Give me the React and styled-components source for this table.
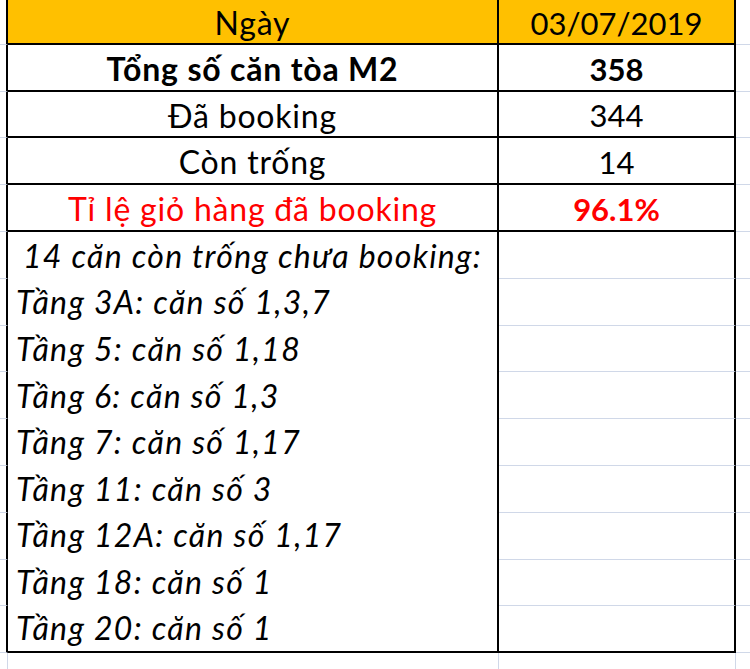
import React from "react";
import styled, { createGlobalStyle, css } from "styled-components";

const Global = createGlobalStyle`
  html, body { margin: 0; padding: 0; background: #ffffff; }
  body { font-family: "Lato", "Liberation Sans", sans-serif; }
`;

const GRID = "#d0d8e8";
const INK = "#000000";

const Sheet = styled.div`
  display: grid;
  grid-template-columns: 8px 491px 237px 1fr;
  grid-template-rows: 45px 47px 46px 47px 47px repeat(9, 46.8px) 1fr;
  width: 750px;
  height: 669px;
  overflow: hidden;
  box-sizing: border-box;
`;

const Gutter = styled.div`
  box-sizing: border-box;
  border-bottom: 1px solid ${GRID};
  ${(p) => p.$edge && css`border-right: 2px solid ${INK};`}
  ${(p) => p.$tail && css`border-bottom: none; border-right: 1px solid ${GRID};`}
  ${(p) => p.$open && css`border-right: none;`}
`;

const Cell = styled.div`
  box-sizing: border-box;
  display: flex;
  align-items: center;
  justify-content: center;
  border-right: 2px solid ${INK};
  border-bottom: ${(p) => (p.$light ? `1px solid ${GRID}` : `2px solid ${INK}`)};
  background: ${(p) => (p.$head ? "#ffc000" : "#ffffff")};
  color: ${(p) => (p.$red ? "#ff0000" : INK)};
  font-size: ${(p) => (p.$label ? "32px" : "31px")};
  letter-spacing: ${(p) => (p.$label ? "0.8px" : "0")};
  font-weight: ${(p) => (p.$bold ? 700 : 400)};
  white-space: nowrap;
  padding-top: 2px;
`;

const NoteCell = styled.div`
  box-sizing: border-box;
  grid-row: 6 / span 9;
  grid-column: 2;
  border-right: 2px solid ${INK};
  border-bottom: 2px solid ${INK};
  display: flex;
  flex-direction: column;
  font-style: italic;
  font-size: 32px;
  letter-spacing: 1.3px;
  color: ${INK};
`;

const NoteLine = styled.div`
  height: 46.8px;
  display: flex;
  align-items: center;
  justify-content: ${(p) => (p.$center ? "center" : "flex-start")};
  padding-left: ${(p) => (p.$center ? "0" : "8px")};
  white-space: nowrap;
`;

const topRows = [
  { label: "Ngày", value: "03/07/2019", head: true },
  { label: "Tổng số căn tòa M2", value: "358", bold: true, valueBold: true },
  { label: "Đã booking", value: "344" },
  { label: "Còn trống", value: "14" },
  { label: "Tỉ lệ giỏ hàng đã booking", value: "96.1%", red: true, valueBold: true },
];

const notes = [
  "Tầng 3A: căn số 1,3,7",
  "Tầng 5: căn số 1,18",
  "Tầng 6: căn số 1,3",
  "Tầng 7: căn số 1,17",
  "Tầng 11: căn số 3",
  "Tầng 12A: căn số 1,17",
  "Tầng 18: căn số 1",
  "Tầng 20: căn số 1",
];

export default function App() {
  return (
    <>
      <Global />
      <Sheet>
        {topRows.map((r) => (
          <React.Fragment key={r.label}>
            <Gutter $edge />
            <Cell $label $head={r.head} $bold={r.bold} $red={r.red}>{r.label}</Cell>
            <Cell $head={r.head} $bold={r.valueBold} $red={r.red}>{r.value}</Cell>
            <Gutter />
          </React.Fragment>
        ))}
        <NoteCell>
          <NoteLine $center>14 căn còn trống chưa booking:</NoteLine>
          {notes.map((n) => (
            <NoteLine key={n}>{n}</NoteLine>
          ))}
        </NoteCell>
        {Array.from({ length: 9 }).map((_, i) => (
          <React.Fragment key={i}>
            <Gutter $edge style={{ gridRow: 6 + i, gridColumn: 1 }} />
            <Cell $light={i < 8} style={{ gridRow: 6 + i, gridColumn: 3 }} />
            <Gutter style={{ gridRow: 6 + i, gridColumn: 4 }} />
          </React.Fragment>
        ))}
        <Gutter $tail />
        <Gutter $tail />
        <Gutter $tail />
        <Gutter $tail $open />
      </Sheet>
    </>
  );
}
